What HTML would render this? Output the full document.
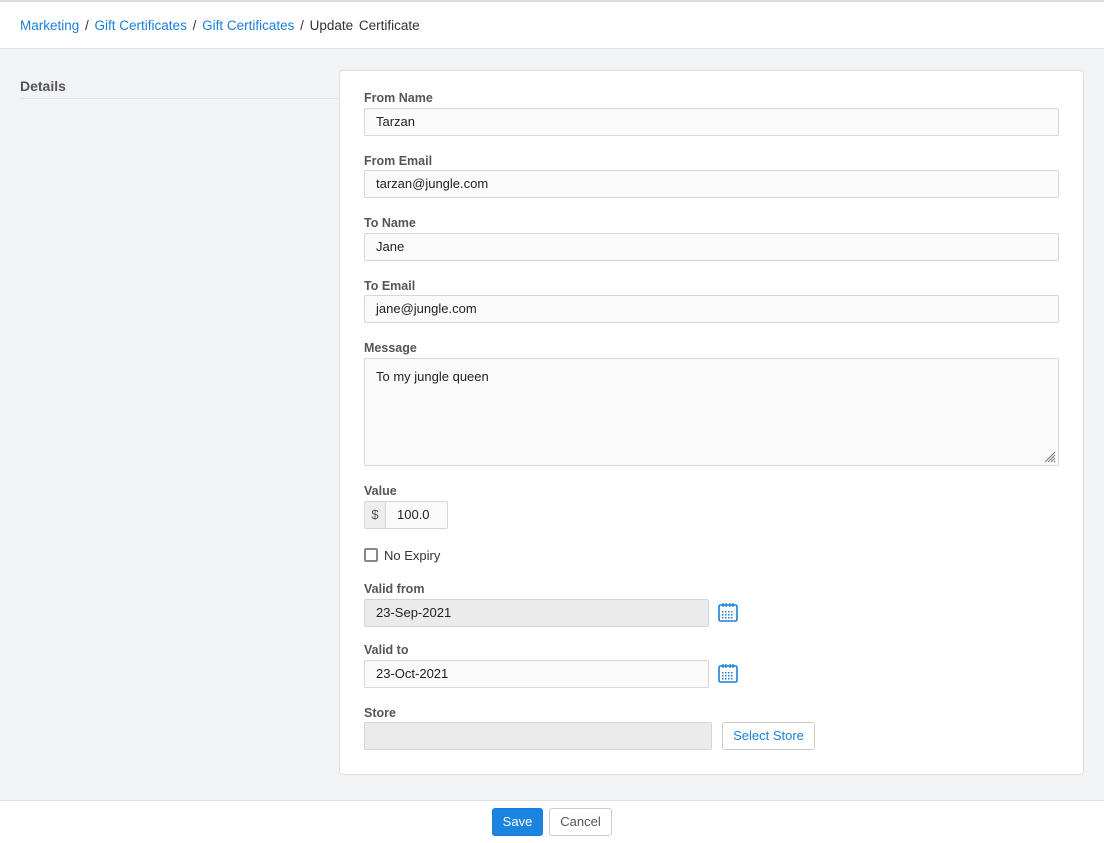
<!DOCTYPE html>
<html><head><meta charset="utf-8"><style>
*{box-sizing:border-box;margin:0;padding:0}
body{width:1104px;height:843px;background:#f2f3f5;font-family:"Liberation Sans",sans-serif;font-size:13px;color:#222;position:relative;overflow:hidden}
.top{position:absolute;left:0;top:0;width:1104px;height:49px;background:#fff;border-top:2px solid #ddd;border-bottom:1px solid #e2e3e5}
.bc{position:absolute;left:20px;top:16px;font-size:13.5px;color:#333;word-spacing:2px}
.bc a{color:#1a7fd9;text-decoration:none;word-spacing:0}
.det{position:absolute;left:20px;top:78px;font-weight:bold;font-size:14px;color:#555;width:318px;height:21px;border-bottom:1px solid #e3e3e3}
.card{position:absolute;left:339px;top:70px;width:745px;height:705px;background:#fff;border:1px solid #e0e1e3;border-radius:4px}
.lbl{position:absolute;left:364px;font-weight:bold;font-size:12.5px;color:#555}
.in{position:absolute;left:364px;height:28px;background:#fafafa;border:1px solid #d6d6d6;border-radius:2px;padding-left:11px;line-height:26px;font-size:13px;color:#222}
.gray{background:#ebebeb}
.cal{position:absolute;left:718px;width:20px;height:20px}
.foot{position:absolute;left:0;top:800px;width:1104px;height:43px;background:#fff;border-top:1px solid #e0e1e3}
.btn{position:absolute;height:28px;border-radius:3px;line-height:26px;text-align:center;font-size:13px}
</style></head><body>
<div class="top"><div class="bc"><a>Marketing</a> / <a>Gift Certificates</a> / <a>Gift Certificates</a> / Update Certificate</div></div>
<div class="det">Details</div>
<div class="card"></div>
<div class="lbl" style="top:91px">From Name</div>
<div class="in" style="top:108px;width:695px">Tarzan</div>
<div class="lbl" style="top:154px">From Email</div>
<div class="in" style="top:170px;width:695px">tarzan@jungle.com</div>
<div class="lbl" style="top:216px">To Name</div>
<div class="in" style="top:233px;width:695px">Jane</div>
<div class="lbl" style="top:279px">To Email</div>
<div class="in" style="top:295px;width:695px">jane@jungle.com</div>
<div class="lbl" style="top:341px">Message</div>
<div class="in" style="top:358px;width:695px;height:108px;padding-top:5px">To my jungle queen
<svg style="position:absolute;right:2px;bottom:2px" width="12" height="12"><path d="M11 1L1 11M11 4L4 11M11 7L7 11M11 10L10 11" stroke="#777" stroke-width="1"/></svg></div>
<div class="lbl" style="top:484px">Value</div>
<div class="in" style="top:501px;width:84px;padding:0">
<span style="position:absolute;left:0;top:0;width:21px;height:26px;background:#eee;border-right:1px solid #d6d6d6;text-align:center;color:#555">$</span>
<span style="position:absolute;left:32px">100.0</span></div>
<div style="position:absolute;left:364px;top:548px;width:14px;height:14px;border:2px solid #888;border-radius:2px"></div>
<div style="position:absolute;left:384px;top:548px;font-size:13px;color:#333">No Expiry</div>
<div class="lbl" style="top:582px">Valid from</div>
<div class="in gray" style="top:599px;width:345px">23-Sep-2021</div>
<svg class="cal" style="top:602px" viewBox="0 0 20 20"><rect x="1" y="3" width="18" height="16" rx="1.5" fill="none" stroke="#1a7fd9" stroke-width="1.6"/><path d="M5 1v4M8 1v4M12 1v4M15 1v4" stroke="#1a7fd9" stroke-width="1.3"/><g fill="#1a7fd9"><rect x="4" y="9" width="1.5" height="1.5"/><rect x="7" y="9" width="1.5" height="1.5"/><rect x="10" y="9" width="1.5" height="1.5"/><rect x="13" y="9" width="1.5" height="1.5"/><rect x="4" y="12" width="1.5" height="1.5"/><rect x="7" y="12" width="1.5" height="1.5"/><rect x="10" y="12" width="1.5" height="1.5"/><rect x="13" y="12" width="1.5" height="1.5"/><rect x="4" y="15" width="1.5" height="1.5"/><rect x="7" y="15" width="1.5" height="1.5"/><rect x="10" y="15" width="1.5" height="1.5"/><rect x="13" y="15" width="1.5" height="1.5"/></g></svg>
<div class="lbl" style="top:643px">Valid to</div>
<div class="in" style="top:660px;width:345px">23-Oct-2021</div>
<svg class="cal" style="top:663px" viewBox="0 0 20 20"><rect x="1" y="3" width="18" height="16" rx="1.5" fill="none" stroke="#1a7fd9" stroke-width="1.6"/><path d="M5 1v4M8 1v4M12 1v4M15 1v4" stroke="#1a7fd9" stroke-width="1.3"/><g fill="#1a7fd9"><rect x="4" y="9" width="1.5" height="1.5"/><rect x="7" y="9" width="1.5" height="1.5"/><rect x="10" y="9" width="1.5" height="1.5"/><rect x="13" y="9" width="1.5" height="1.5"/><rect x="4" y="12" width="1.5" height="1.5"/><rect x="7" y="12" width="1.5" height="1.5"/><rect x="10" y="12" width="1.5" height="1.5"/><rect x="13" y="12" width="1.5" height="1.5"/><rect x="4" y="15" width="1.5" height="1.5"/><rect x="7" y="15" width="1.5" height="1.5"/><rect x="10" y="15" width="1.5" height="1.5"/><rect x="13" y="15" width="1.5" height="1.5"/></g></svg>
<div class="lbl" style="top:706px">Store</div>
<div class="in gray" style="top:722px;width:348px"></div>
<div class="btn" style="left:722px;top:722px;width:93px;border:1px solid #ccc;background:#fff;color:#1a7fd9">Select Store</div>
<div class="foot"></div>
<div class="btn" style="left:492px;top:808px;width:51px;background:#1a84e0;color:#fff;border:1px solid #1a7fd9">Save</div>
<div class="btn" style="left:549px;top:808px;width:63px;border:1px solid #ccc;background:#fff;color:#555">Cancel</div>
</body></html>
